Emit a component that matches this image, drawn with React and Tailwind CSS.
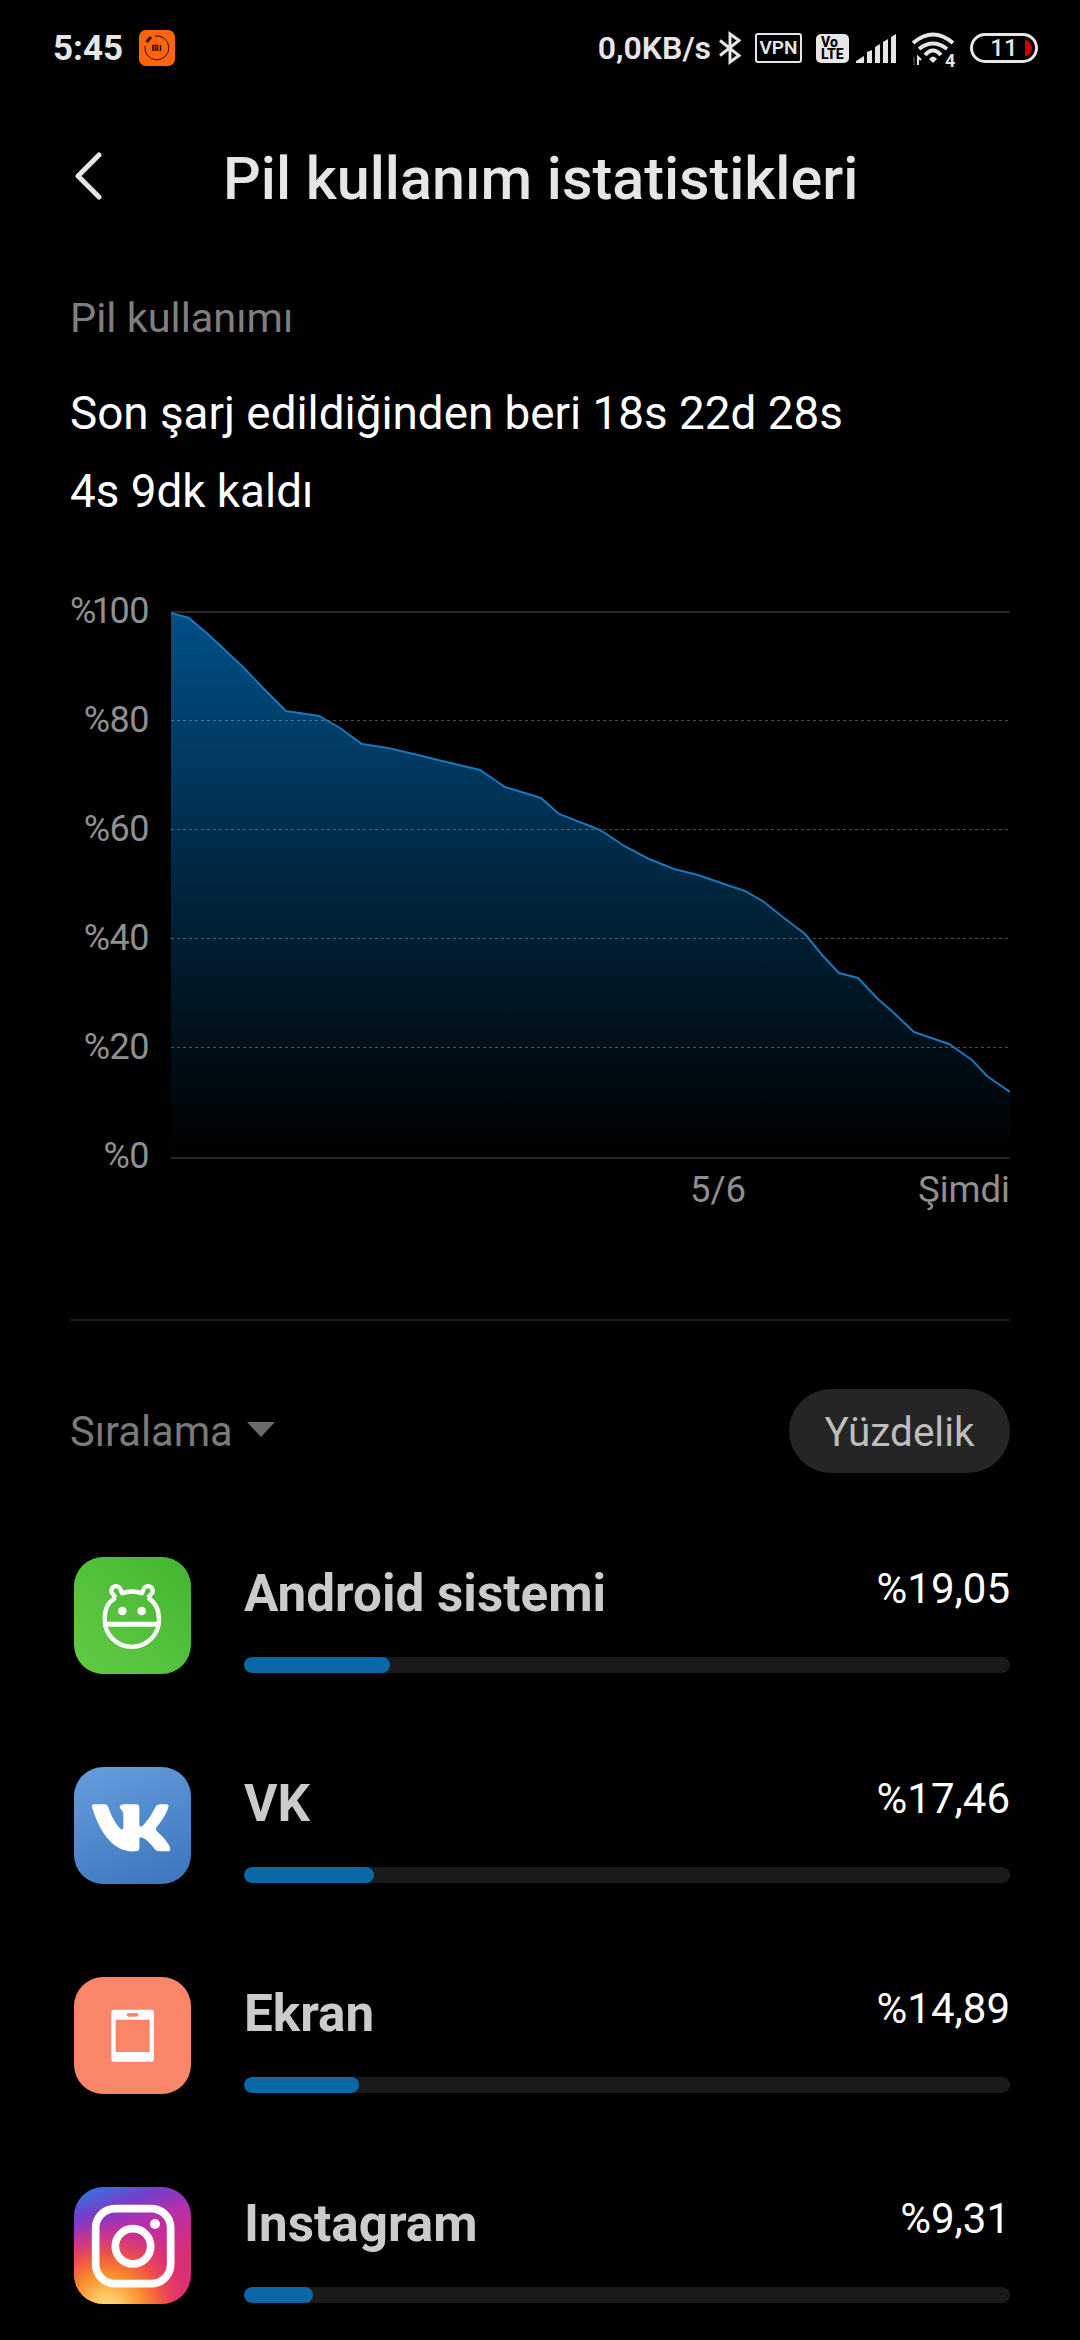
import { useId } from "react";

// battery level samples, in plot coordinates (839 x 548)
const LEVELS = [
  [0, 2], [18, 7], [39, 25], [73, 57], [92, 77], [115, 100], [148, 105],
  [169, 117], [191, 133], [217, 137], [247, 144], [267, 149], [288, 154],
  [309, 159], [334, 176], [370, 187], [388, 203], [429, 219], [455, 236],
  [478, 248], [503, 258], [527, 264], [556, 274], [574, 280], [593, 291],
  [613, 307], [634, 323], [652, 345], [668, 362], [687, 367], [707, 388],
  [724, 403], [743, 421], [778, 433], [801, 449], [816, 465], [839, 481],
];

const APPS = [
  { name: "Android sistemi", value: "%19,05", width: 19, icon: AndroidIcon },
  { name: "VK", value: "%17,46", width: 17, icon: VkIcon },
  { name: "Ekran", value: "%14,89", width: 15, icon: ScreenIcon },
  { name: "Instagram", value: "%9,31", width: 9, icon: InstagramIcon },
];

function Tile({ fill, children }) {
  return (
    <svg className="size-[117px] shrink-0" viewBox="0 0 351 351">
      <rect width="351" height="351" rx="88" fill={fill} />
      {children}
    </svg>
  );
}

function AndroidIcon() {
  const id = useId();
  return (
    <Tile fill={`url(#${id})`}>
      <defs>
        <linearGradient id={id} x1="0" y1="1" x2="1" y2="0">
          <stop offset="0" stopColor="#62cb46" />
          <stop offset="1" stopColor="#44b52f" />
        </linearGradient>
      </defs>
      <g fill="none" stroke="#fff" strokeWidth="13" strokeLinejoin="round">
        <path d="M125 122C95 140 92 165 92 188A81 81 0 0 0 255 188C255 165 250 140 222 122" />
        <path d="M125 122L113 107A14 14 0 1 1 139 96L144 109Q174 98 204 109L209 96A14 14 0 1 1 235 107L222 122" />
        <path d="M92 202H255" strokeWidth="15" />
      </g>
      <circle cx="145" cy="162" r="13" fill="#fff" />
      <circle cx="203" cy="162" r="13" fill="#fff" />
    </Tile>
  );
}

function VkIcon() {
  const id = useId();
  return (
    <Tile fill={`url(#${id})`}>
      <defs>
        <linearGradient id={id} x1="0.3" y1="0" x2="0.7" y2="1">
          <stop offset="0" stopColor="#629adb" />
          <stop offset="1" stopColor="#3f78bf" />
        </linearGradient>
      </defs>
      <path
        transform="translate(-74 -82)"
        fill="#fff"
        d="M134 194H165Q174 194 177 203C186 232 205 262 214 268Q222 273 222 260V225C222 210 208 208 212 199Q215 194 224 194H262Q270 194 270 203V252Q270 266 280 258C295 244 310 220 318 202Q322 194 331 194H350Q360 195 357 203C350 225 335 248 322 262Q317 268 323 275C340 290 356 308 362 324Q365 335 353 335H330Q320 335 316 328C305 314 290 297 276 293Q270 291 270 299V325Q270 335 258 335C200 340 155 290 129 206Q126 194 134 194Z"
      />
    </Tile>
  );
}

function ScreenIcon() {
  return (
    <Tile fill="#fa8669">
      <path
        fill="#fff"
        fillRule="evenodd"
        d="M120 98H232Q240 98 240 106V246Q240 254 232 254H120Q112 254 112 246V106Q112 98 120 98ZM125 128V225H227V128ZM164 108A5 5 0 0 0 164 119H188A5 5 0 0 0 188 108Z"
      />
    </Tile>
  );
}

function InstagramIcon() {
  const id = useId();
  return (
    <Tile fill={`url(#${id}a)`}>
      <defs>
        <linearGradient id={`${id}a`} gradientUnits="userSpaceOnUse" x1="90" y1="-10" x2="210" y2="330">
          <stop offset="0.04" stopColor="#4169dc" />
          <stop offset="0.2" stopColor="#763ec9" />
          <stop offset="0.4" stopColor="#b52fab" />
          <stop offset="0.75" stopColor="#dc2d78" />
        </linearGradient>
        <radialGradient id={`${id}b`} gradientUnits="userSpaceOnUse" cx="100" cy="370" r="270">
          <stop offset="0" stopColor="#ffe08a" />
          <stop offset="0.18" stopColor="#fdc45f" />
          <stop offset="0.42" stopColor="#fa8a2b" />
          <stop offset="0.62" stopColor="#f2583f" stopOpacity="0.9" />
          <stop offset="1" stopColor="#dc2d78" stopOpacity="0" />
        </radialGradient>
      </defs>
      <rect width="351" height="351" rx="88" fill={`url(#${id}b)`} />
      <g fill="none" stroke="#fff" strokeWidth="23">
        <rect x="65" y="65" width="225" height="225" rx="58" />
        <circle cx="177" cy="178" r="53" />
      </g>
      <circle cx="243" cy="111" r="15" fill="#fff" />
    </Tile>
  );
}

function StatusBar() {
  return (
    <div className="flex h-24 items-center justify-between pr-[42px] pl-[53px] text-[#e6e6e6]">
      <div className="flex items-center">
        <span className="mt-[2px] text-[35px] font-bold">5:45</span>
        <svg className="ml-4 size-9" viewBox="0 0 36 36">
          <rect width="36" height="36" rx="7" fill="#ff6409" />
          <g fill="none" stroke="#2a0d00">
            <path d="M16 6A12 12 0 1 1 6 16" strokeWidth="1" />
            <path d="M7.5 12L12 7" strokeWidth="3" />
            <path d="M14 21V15.500H18.500V21M16.300 17V21M21.500 15V21" strokeWidth="1.600" />
          </g>
        </svg>
      </div>
      <div className="flex items-center">
        <span className="text-[32px] font-semibold">0,0KB/s</span>
        <svg className="ml-2 h-[34px] w-[22px]" viewBox="0 0 22 34" fill="none" stroke="currentColor" strokeWidth="3">
          <path d="M1 9.500L20 24.500L11 31V3L20 9.500L1 24.500" />
        </svg>
        <div className="ml-[14px] flex h-[30px] w-[47px] items-center justify-center rounded-[3px] border-2 border-[#e6e6e6] text-[19px] font-semibold">
          VPN
        </div>
        <div className="ml-[14px] flex h-[29px] w-[33px] flex-col rounded-[5px] bg-[#e6e6e6] pt-[2px] pl-[5px] text-[14px] leading-[12.500px] font-extrabold text-black">
          <span>Vo</span>
          <span>LTE</span>
        </div>
        <svg className="ml-[7px] h-[29px] w-10" viewBox="0 0 40 29" fill="currentColor">
          <path d="M0 29V27L8 22V29ZM11 29V18L16 16V29ZM19 29V13L24 10V29ZM27 29V8L32 5V29ZM35 29V3L40 0V29Z" />
        </svg>
        <svg className="ml-4 h-10 w-[44px]" viewBox="0 -2 44 40" fill="none" stroke="currentColor">
          <g strokeWidth="4">
            <path d="M1 13Q21 -4 41 13" />
            <path d="M7 19Q21 8 35 19" />
            <path d="M13 25Q21 16 29 25" />
          </g>
          <path d="M17 29Q21 24 25 29L21 33Z" fill="currentColor" stroke="none" />
          <path d="M6 35V27L9 30" strokeWidth="2" />
          <path d="M2 27V35" strokeWidth="1.500" className="opacity-30" />
          <text x="33" y="37" fontSize="18" fontWeight="700" fill="currentColor" stroke="none">4</text>
        </svg>
        <div className="relative ml-[14px] flex h-[30px] w-[68px] items-center justify-center rounded-full border-[3px] border-[#e6e6e6] text-[24px] leading-6 font-medium">
          11
          <svg className="absolute right-[3px] h-4 w-[7px]" viewBox="0 0 7 16">
            <path d="M0 0H2Q7 3 7 8T2 16H0Z" fill="#cc0000" />
          </svg>
        </div>
      </div>
    </div>
  );
}

function BatteryChart() {
  const line = LEVELS.map((p) => p.join(",")).join(" ");

  return (
    <div className="flex">
      <div className="w-[101px] pt-px pr-[22px] text-[36px] leading-[109px] tracking-[-0.5px] text-[#8f8f8f]">
        <div className="flex justify-end">
          %<span className="-mr-[2px] -ml-[4px]">1</span>00
        </div>
        {[80, 60, 40, 20, 0].map((n) => (
          <div key={n} className="text-right">%{n}</div>
        ))}
      </div>
      <div className="flex w-[839px] flex-col pt-[55px]">
        <svg className="h-[548px] w-[839px]" viewBox="0 0 839 548">
          <defs>
            <linearGradient id="level" x1="0" y1="0" x2="0" y2="546" gradientUnits="userSpaceOnUse">
              <stop offset="0" stopColor="#005089" />
              <stop offset="0.5" stopColor="#00263f" />
              <stop offset="0.8" stopColor="#000f18" />
              <stop offset="1" stopColor="#000000" />
            </linearGradient>
          </defs>
          <path d="M0 1H839M0 547H839" stroke="#272727" strokeWidth="2" />
          <polygon points={`${line} 839,546 0,546`} fill="url(#level)" />
          <path
            d="M0 109.500H839M0 218.500H839M0 327.500H839M0 436.500H839"
            stroke="#fff"
            strokeOpacity="0.3"
            strokeDasharray="3 3"
          />
          <polyline points={line} fill="none" stroke="#1c76ba" strokeWidth="2" />
        </svg>
        <div className="flex justify-end gap-[172px] pt-px text-[36.5px] leading-[60px] text-[#8f8f8f]">
          <span>5/6</span>
          <span>Şimdi</span>
        </div>
      </div>
    </div>
  );
}

function AppRow({ app }) {
  const Icon = app.icon;
  return (
    <li className="flex h-[210px] pl-1">
      <Icon />
      <div className="ml-[53px] flex-1">
        <div className="flex h-[100px] justify-between">
          <span className="pt-[7px] text-[51.2px] leading-[60px] font-bold text-[#cbcbcb]">{app.name}</span>
          <span className="pt-[2px] text-[42px] leading-[60px] text-white">{app.value}</span>
        </div>
        <div className="h-4 overflow-hidden rounded-full bg-[#1a1a1a]">
          <div className="h-full rounded-full bg-[#0b68a6]" style={{ width: `${app.width}%` }} />
        </div>
      </div>
    </li>
  );
}

export default function App() {
  return (
    <div className="h-[2340px] w-[1080px] overflow-hidden bg-black font-['Roboto',sans-serif] text-white">
      <StatusBar />

      <header className="flex h-[166px] items-center pl-[74px] text-[#e6e6e6]">
        <svg className="mb-[6px] h-12 w-7" viewBox="0 0 28 48" fill="none" stroke="currentColor" strokeWidth="5" strokeLinecap="round" strokeLinejoin="round">
          <path d="M25 3L4 24L25 45" />
        </svg>
        <h1 className="ml-[121px] text-[59.3px] font-medium">Pil kullanım istatistikleri</h1>
      </header>

      <main className="px-[70px] pt-[26px]">
        <h2 className="text-[41.5px] leading-[60px] text-[#7f7f7f]">Pil kullanımı</h2>
        <div className="mt-[27px] mb-[25px] text-[45.8px] leading-[78px]">
          <p>Son şarj edildiğinden beri 18s 22d 28s</p>
          <p>4s 9dk kaldı</p>
        </div>

        <BatteryChart />

        <hr className="mt-[99px] border-t-2 border-[#1b1b1b]" />

        <div className="mt-[68px] mb-[84px] flex h-[84px] items-center justify-between">
          <button className="flex items-center gap-[14px] pt-[2px] text-[41.6px] text-[#7a7a7a]">
            Sıralama
            <svg className="mb-1 h-[15px] w-7" viewBox="0 0 28 15" fill="#6a6a6a">
              <path d="M0 0H28L14 15Z" />
            </svg>
          </button>
          <button className="h-full w-[221px] rounded-full bg-[#252525] pt-[2px] text-[40.5px] text-[#bdbdbd]">
            Yüzdelik
          </button>
        </div>

        <ul>
          {APPS.map((app) => (
            <AppRow key={app.name} app={app} />
          ))}
        </ul>
      </main>
    </div>
  );
}
